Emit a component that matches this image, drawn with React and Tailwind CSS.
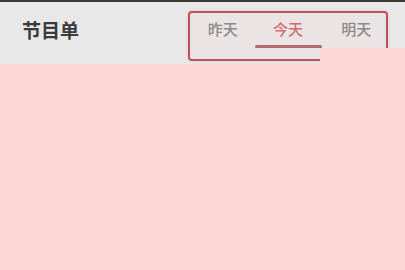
export default function App() {
  const tabs = ["昨天", "今天", "明天"];
  const active = 1;

  return (
    <div
      className="relative h-[270px] w-[405px] overflow-hidden bg-[#fdd7d4]"
      style={{ fontFamily: '"Noto Sans CJK SC", "Noto Sans", sans-serif' }}
    >
      {/* status strip */}
      <div className="h-[2px] bg-[#3a3930]" />

      {/* header */}
      <div className="flex h-[62px] items-start justify-between bg-[#e9e8e8] pl-[22px] pr-[17px] pt-[9px]">
        <div className="mt-[7px] text-[19px] font-bold leading-[24px] text-[#3a3a3a]">
          节目单
        </div>
        <div className="grid h-[50px] w-[200px] grid-cols-3 rounded-[4px] border-2 border-[#b5545c] bg-[#ebe4e4] shadow-[0_0_3px_#f3b8b8]">
          {tabs.map((t, i) => (
            <div key={t} className="flex flex-col items-center pt-[6px]">
              <span
                className={`text-[15px] font-medium leading-[20px] ${
                  i === active ? "text-[#cf6e72]" : "text-[#8a8a8a]"
                } ${i === 2 ? "pl-[6px]" : ""}`}
              >
                {t}
              </span>
              {i === active && (
                <div className="mt-[6px] h-[3px] w-[67px] rounded-full bg-[#b36a6c]" />
              )}
            </div>
          ))}
        </div>
      </div>

      {/* overlay patch */}
      <div className="absolute left-[320px] top-[48px] h-[16px] w-[85px] bg-[#fdd7d4]" />
    </div>
  );
}
